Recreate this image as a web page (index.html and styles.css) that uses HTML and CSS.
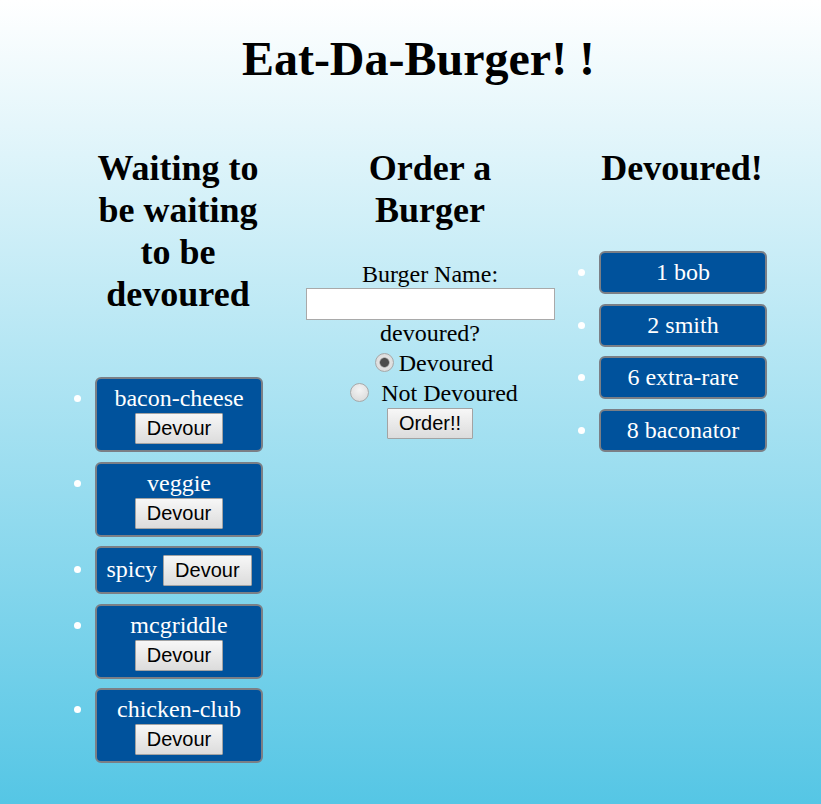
FILE: index.html
```html
<!DOCTYPE html>
<html lang="en">
<head>
<meta charset="utf-8">
<title>Eat-Da-Burger!</title>
<link rel="stylesheet" href="styles.css">
</head>
<body>
<h1 class="title">Eat-Da-Burger! !</h1>
<div class="row">
  <div class="col">
    <h2 class="col-title">Waiting to be waiting to be devoured</h2>
    <ul class="burger-list">
      <li><div class="card">bacon-cheese <button class="btn">Devour</button></div></li>
      <li><div class="card">veggie <button class="btn">Devour</button></div></li>
      <li><div class="card">spicy <button class="btn">Devour</button></div></li>
      <li><div class="card">mcgriddle <button class="btn">Devour</button></div></li>
      <li><div class="card">chicken-club <button class="btn">Devour</button></div></li>
    </ul>
  </div>
  <div class="col">
    <h2 class="col-title">Order a Burger</h2>
    <form class="order-form">
      <label class="form-line" for="bn">Burger Name:</label>
      <input class="name-input" id="bn" type="text">
      <div class="form-line">devoured?</div>
      <label class="radio-row"><input class="radio" type="radio" name="dev" checked>Devoured</label>
      <label class="radio-row"><input class="radio" type="radio" name="dev"><span class="gap"></span>Not Devoured</label>
      <button class="btn" type="button">Order!!</button>
    </form>
  </div>
  <div class="col">
    <h2 class="col-title">Devoured!</h2>
    <ul class="burger-list">
      <li><div class="card">1 bob</div></li>
      <li><div class="card">2 smith</div></li>
      <li><div class="card">6 extra-rare</div></li>
      <li><div class="card">8 baconator</div></li>
    </ul>
  </div>
</div>
</body>
</html>
```
FILE: styles.css
```css
html {
  height: 100%;
  background: linear-gradient(to bottom, #ffffff 0%, #55c6e5 100%);
}
body {
  margin: 0;
  font-family: "Liberation Serif", "Times New Roman", serif;
  font-size: 24px;
  color: #000;
}
.title {
  font-size: 48px;
  font-weight: bold;
  text-align: center;
  margin: 32px 0 31px;
  padding-left: 16px;
  line-height: 54px;
}
.row {
  display: flex;
  padding-left: 52px;
}
.col {
  width: 252px;
  text-align: center;
}
.col-title {
  font-size: 36px;
  line-height: 42px;
  font-weight: bold;
  max-width: 180px;
  margin: 30px auto 30px;
}
.burger-list {
  margin: 0;
  padding: 32px 0 0 43px;
  text-align: left;
  color: #fff;
}
.burger-list li {
  margin-bottom: 9.5px;
}
.card {
  box-sizing: border-box;
  width: 168px;
  background: #00529c;
  border: 2px solid #7b7f86;
  border-radius: 6px;
  padding: 6px;
  color: #fff;
  text-align: center;
  line-height: 27px;
}
.card .btn {
  margin: 1px 0 0;
}
.btn {
  font-family: "Liberation Sans", Arial, sans-serif;
  font-size: 20px;
  height: 31px;
  padding: 0 11px;
  margin: 0;
  border: 1.5px solid #a3a3a3;
  border-radius: 1px;
  background: linear-gradient(to bottom, #f7f7f7, #dcdcdc);
  color: #000;
  vertical-align: baseline;
}
.order-form {
  display: flex;
  flex-direction: column;
  align-items: center;
}
.form-line {
  height: 27px;
  line-height: 27px;
}
.name-input {
  box-sizing: border-box;
  width: 249px;
  height: 32px;
  margin: 0;
  border: 1.5px solid #a9a9a9;
  background: #fff;
  padding: 1px 3px;
  font-size: 20px;
}
.order-form .form-line + .radio-row {
  margin-top: 1px;
}
.radio-row {
  display: flex;
  align-items: center;
  height: 30px;
}
.radio {
  appearance: none;
  -webkit-appearance: none;
  box-sizing: border-box;
  width: 19px;
  height: 19px;
  margin: 0 5px 0 8px;
  border-radius: 50%;
  border: 1px solid #a8a8a8;
  background: radial-gradient(circle at 50% 35%, #f4f4f4 0%, #d6d6d6 100%);
  position: relative;
  top: -1px;
}
.radio:checked {
  background: radial-gradient(circle, #4d4d4d 0, #4d4d4d 4px, #8a8a8a 4.5px, #e3e3e3 5.5px, #d4d4d4 100%);
}
.gap {
  display: inline-block;
  width: 7px;
}
```
